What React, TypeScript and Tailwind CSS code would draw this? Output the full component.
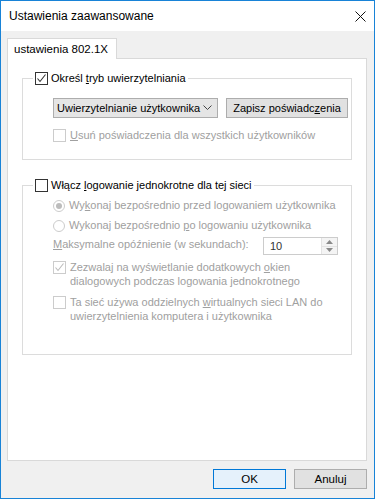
function CheckBox({ checked = false, disabled = false }: { checked?: boolean; disabled?: boolean }) {
  return (
    <span
      className={
        'flex h-[13px] w-[13px] shrink-0 items-center justify-center border bg-white ' +
        (disabled ? 'border-[#cccccc]' : 'border-[#333333]')
      }
    >
      {checked && (
        <svg width="11" height="11" viewBox="0 0 11 11" fill="none">
          <path d="M1.5 5.5 L4 8.5 L9.5 1.5" stroke={disabled ? '#bcbcbc' : '#333333'} strokeWidth="1.1" />
        </svg>
      )}
    </span>
  )
}

function Radio({ checked = false }: { checked?: boolean }) {
  return (
    <span className="flex h-[12px] w-[12px] shrink-0 items-center justify-center rounded-full border border-[#cccccc] bg-white">
      {checked && <span className="h-[6px] w-[6px] rounded-full bg-[#bcbcbc]" />}
    </span>
  )
}

export default function App() {
  return (
    <div className="flex h-[499px] w-[375px] flex-col whitespace-nowrap border border-[#1883d7] bg-[#f0f0f0] font-['Liberation_Sans',Arial,sans-serif] text-[11.5px] leading-[15px] text-black">
      {/* pasek tytułu */}
      <div className="flex h-[30px] items-center justify-between bg-white pl-[8px] pr-[8px] text-[12px]">
        <span>Ustawienia zaawansowane</span>
        <svg width="11" height="11" viewBox="0 0 11 11" fill="none">
          <path d="M0.5 0.5 L10.5 10.5 M10.5 0.5 L0.5 10.5" stroke="#111" strokeWidth="1" />
        </svg>
      </div>

      <div className="flex flex-1 flex-col pl-[6px] pt-[7px] text-[11px]">
        {/* zakładka */}
        <div className="flex">
          <div className="relative z-10 -mb-px flex h-[21px] items-center border border-b-0 border-[#d9d9d9] bg-white pl-[6px] pr-[8px] text-[11.5px]">
            ustawienia 802.1X
          </div>
        </div>

        {/* panel */}
        <div className="flex h-[403px] w-[360px] flex-col border border-[#d9d9d9] bg-white px-[14px] pt-[11px]">
          <fieldset className="border border-[#dcdcdc] pb-[16px] pl-[10px]">
            <legend className="flex h-[16px] items-center gap-[3px] px-[2px]">
              <CheckBox checked />
              <span>
                Określ <u>t</u>ryb uwierzytelniania
              </span>
            </legend>
            <div className="ml-[20px] mt-[12px] flex">
              <div className="flex h-[20px] w-[165px] items-center justify-between border border-[#adadad] bg-[#e5e5e5] pl-[3px] pr-[5px]">
                <span>Uwierzytelnianie użytkownika</span>
                <svg width="9" height="6" viewBox="0 0 9 6" fill="none">
                  <path d="M0.5 0.5 L4.5 4.5 L8.5 0.5" stroke="#444" strokeWidth="1" />
                </svg>
              </div>
              <div className="ml-[8px] flex h-[20px] w-[122px] items-center justify-center border border-[#adadad] bg-[#e1e1e1]">
                <span>
                  Zapisz poświadc<u>z</u>enia
                </span>
              </div>
            </div>
            <div className="ml-[20px] mt-[10px] flex h-[15px] items-center gap-[4px] text-[#a0a0a0]">
              <CheckBox disabled />
              <span>
                <u>U</u>suń poświadczenia dla wszystkich użytkowników
              </span>
            </div>
          </fieldset>

          <fieldset className="mt-[17px] border border-[#dcdcdc] pb-[31px] pl-[10px]">
            <legend className="flex h-[16px] items-center gap-[3px] px-[2px]">
              <CheckBox />
              <span>
                Włącz <u>l</u>ogowanie jednokrotne dla tej sieci
              </span>
            </legend>
            <div className="ml-[20px] flex flex-col text-[#a0a0a0]">
              <div className="mt-[5px] flex h-[15px] items-center gap-[4px]">
                <Radio checked />
                <span>
                  Wy<u>k</u>onaj bezpośrednio przed logowaniem użytkownika
                </span>
              </div>
              <div className="mt-[5px] flex h-[15px] items-center gap-[4px]">
                <Radio />
                <span>
                  Wykonaj bezpośrednio <u>p</u>o logowaniu użytkownika
                </span>
              </div>
              <div className="mt-[4px] flex items-start">
                <span className="w-[210px]">
                  <u>M</u>aksymalne opóźnienie (w sekundach):
                </span>
                <div className="flex h-[18px] w-[75px] border border-[#cccccc] bg-white">
                  <span className="flex flex-1 items-center pl-[6px] text-[#333333]">10</span>
                  <div className="flex w-[16px] flex-col border-l border-[#e3e3e3] bg-[#f4f4f4]">
                    <div className="flex flex-1 items-center justify-center border-b border-[#e3e3e3]">
                      <svg width="7" height="4" viewBox="0 0 7 4">
                        <path d="M0 4 L3.5 0 L7 4Z" fill="#8a8a8a" />
                      </svg>
                    </div>
                    <div className="flex flex-1 items-center justify-center">
                      <svg width="7" height="4" viewBox="0 0 7 4">
                        <path d="M0 0 L3.5 4 L7 0Z" fill="#8a8a8a" />
                      </svg>
                    </div>
                  </div>
                </div>
              </div>
              <div className="mt-[5px] flex items-start gap-[4px] leading-[14px]">
                <span className="mt-[1px]">
                  <CheckBox checked disabled />
                </span>
                <span>
                  Zezwalaj na wyświetlanie dodatkowych <u>o</u>kien
                  <br />
                  dialogowych podczas logowania jednokrotnego
                </span>
              </div>
              <div className="mt-[7px] flex items-start gap-[4px] leading-[14px]">
                <span className="mt-[1px]">
                  <CheckBox disabled />
                </span>
                <span>
                  Ta sieć używa oddzielnych <u>w</u>irtualnych sieci LAN do
                  <br />
                  uwierzytelnienia komputera i użytkownika
                </span>
              </div>
            </div>
          </fieldset>
        </div>

        {/* przyciski */}
        <div className="mt-[8px] flex w-[360px] justify-end gap-[8px] text-[11.5px]">
          <button className="flex h-[20px] w-[73px] items-center justify-center border border-[#0078d7] bg-[#e5f1fb]">
            OK
          </button>
          <button className="flex h-[20px] w-[73px] items-center justify-center border border-[#adadad] bg-[#e1e1e1]">
            Anuluj
          </button>
        </div>
      </div>
    </div>
  )
}
